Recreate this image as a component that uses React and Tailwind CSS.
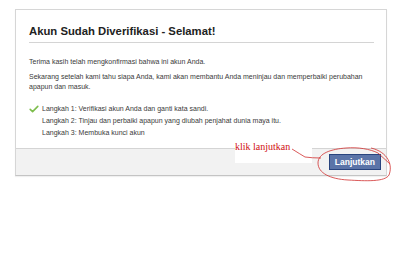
export default function App() {
  return (
    <div className="relative w-[400px] h-[257px] bg-white overflow-hidden" style={{ fontFamily: '"Liberation Sans", Arial, sans-serif' }}>
      <div className="ml-[15px] mt-[9px] w-[372px] border border-[#d6d6d6] border-b-[#c4c4c4] bg-white shadow-[0_1px_1px_rgba(0,0,0,0.06)]">
        <div className="pl-[13px] pr-[12px]">
          <div className="pt-[14px] pb-[4px] border-b border-[#d4d4d4]">
            <h1 className="text-[11.3px] leading-[14px] font-bold text-[#222]">Akun Sudah Diverifikasi - Selamat!</h1>
          </div>
          <div className="pt-[14px] pb-[9px] text-[7px] text-[#3a3a3a]">
            <p className="leading-[10px]">Terima kasih telah mengkonfirmasi bahwa ini akun Anda.</p>
            <p className="mt-[5px] leading-[10px]">
              Sekarang setelah kami tahu siapa Anda, kami akan membantu Anda meninjau dan memperbaiki perubahan
              <br />
              apapun dan masuk.
            </p>
            <ul className="mt-[11px] flex flex-col">
              <li className="flex items-center h-[12px]">
                <svg width="10" height="8" viewBox="0 0 10 8" className="mr-[3px]">
                  <path d="M1.2 4.4 L3.6 6.6 L8.8 1.4" fill="none" stroke="#7dbd4c" strokeWidth="1.6" strokeLinecap="round" strokeLinejoin="round" />
                </svg>
                <span>Langkah 1: Verifikasi akun Anda dan ganti kata sandi.</span>
              </li>
              <li className="flex items-center h-[12px] pl-[13px]">Langkah 2: Tinjau dan perbaiki apapun yang diubah penjahat dunia maya itu.</li>
              <li className="flex items-center h-[12px] pl-[13px]">Langkah 3: Membuka kunci akun</li>
            </ul>
          </div>
        </div>
        <div className="h-[27px] bg-[#f2f2f2] border-t border-[#d4d4d4] flex items-center justify-end pr-[5px]">
          <button className="h-[16px] px-[5px] bg-[#5b74a8] border border-[#29447e] text-white text-[8.5px] font-bold leading-none">Lanjutkan</button>
        </div>
      </div>

      <div className="absolute left-[235px] top-[148px] w-[77px] h-[15px] bg-white"></div>
      <div className="absolute left-[235px] top-[141px] text-[10px] leading-[12px] text-[#d01010]" style={{ fontFamily: '"Liberation Serif", "Times New Roman", serif' }}>klik lanjutkan</div>
      <svg className="absolute left-0 top-0 pointer-events-none" width="400" height="257" viewBox="0 0 400 257">
        <path d="M292 149 Q300 154 305 157 Q312 158 321 158" fill="none" stroke="#d03030" strokeWidth="0.8" />
        <path d="M371 148 C388 152 393 165 389 175 C385 182 366 181 348 180 C330 179 318 173 318 163 C318 153 332 149 346 148 C358 147 370 149 378 153 L390 164" fill="none" stroke="#d03030" strokeWidth="0.8" />
      </svg>
    </div>
  );
}
